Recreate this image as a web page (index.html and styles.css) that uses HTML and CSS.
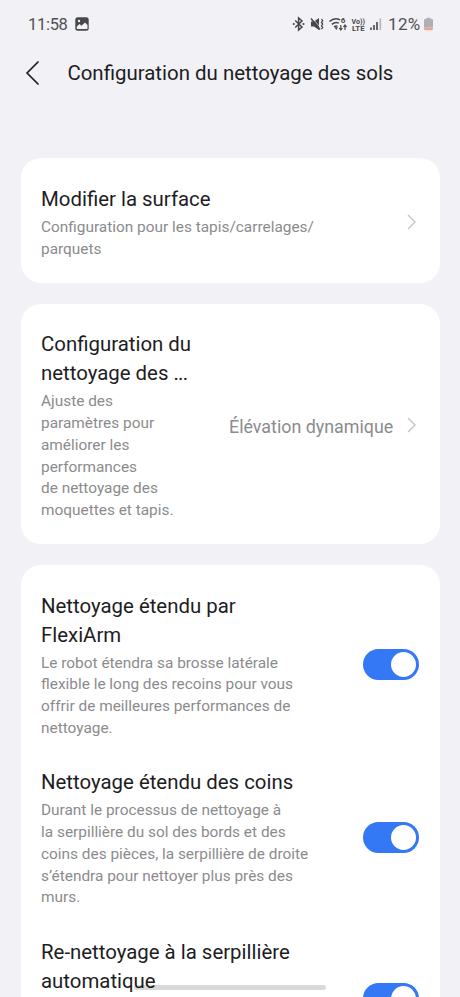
FILE: index.html
```html
<!DOCTYPE html>
<html lang="fr">
<head>
<meta charset="utf-8">
<meta name="viewport" content="width=device-width, initial-scale=1">
<title>Configuration du nettoyage des sols</title>
<link rel="stylesheet" href="styles.css">
</head>
<body>
<div class="screen">
  <div class="status">
    <span class="time">11:58</span>
    <svg class="photo" width="14" height="14" viewBox="0 0 14 14"><rect x=".3" y=".3" width="13.4" height="13.4" rx="2.5" fill="#48484a"/><circle cx="4" cy="4" r="1.2" fill="#f2f1f6"/><path d="M1.8 9.6 4.4 7l2 1.8L10 5.500l2.500 2.400v3.300q0 .8-.8.8H2.600q-.8 0-.8-.8z" fill="#f2f1f6"/></svg>
    <svg class="signals" width="94" height="18" viewBox="0 0 94 18" fill="none" stroke="#48484a">
      <path d="M3.2 5.500 10 12l-3.400 3V3L10 6l-6.800 6.500" stroke-width="1.500"/>
      <circle cx="1.800" cy="9" r="1.100" fill="#48484a" stroke="none"/><circle cx="11.500" cy="9" r="1.100" fill="#48484a" stroke="none"/>
      <path d="M19 6.500h3L27 3v12l-5-3.500h-3z" fill="#48484a" stroke="none"/>
      <path d="M20 3 30 14" stroke="#f2f1f6" stroke-width=".7"/><path d="M19 3.500 28 14.500" stroke-width="1.400"/>
      <path d="M29.500 4l1.200 1.700-1.200 1.700 1.200 1.700-1.200 1.700 1.200 1.700-1.200 1.700" stroke-width="1.300"/>
      <path d="M37.500 6.500q5-4.500 10.500-1.700M39.800 9.400q3.500-3 7-1.300M42 12q2-1.500 3.500-.5" stroke-width="1.500"/>
      <path d="M42.500 12.300h3.500L44.300 15z" fill="#48484a" stroke="none"/>
      <path d="M48.800 10v5M47.200 13l1.600 2 1.600-2M53 15v-5M51.400 12l1.600-2 1.600 2" stroke-width="1.200"/>
      <text x="48.800" y="8.300" class="tiny">6</text>
      <text x="59.500" y="8.500" class="tiny" textLength="13.500" lengthAdjust="spacingAndGlyphs">Vo))</text>
      <text x="60" y="16.300" class="tiny" textLength="12.500" lengthAdjust="spacingAndGlyphs">LTE</text>
      <path d="M79 12.500V15M82 10v5M85 7v8" stroke-width="1.600"/><path d="M88.300 3.500V15" stroke="#b5b5b9" stroke-width="1.600"/>
    </svg>
    <span class="percent">12%</span>
    <svg class="battery" width="9" height="14" viewBox="0 0 10 14"><path d="M3 0h4v1.300h1.500Q10 1.300 10 3v8H0V3q0-1.700 1.500-1.700H3z" fill="#b0b0b4"/><path d="M0 11h10v1q0 2-1.500 2h-7Q0 14 0 12z" fill="#eda294"/></svg>
  </div>
  <header class="header">
    <svg class="back" width="14" height="24" viewBox="0 0 14 24" fill="none" stroke="#1b1b1e" stroke-width="1.700" stroke-linecap="round" stroke-linejoin="round"><path d="M12 1 1 12l11 11"/></svg>
    <h1>Configuration du nettoyage des sols</h1>
  </header>
  <main class="cards">
    <section class="card row">
      <div class="copy">
        <h2>Modifier la surface</h2>
        <p>Configuration pour les tapis/carrelages/<br>parquets</p>
      </div>
      <svg class="chevron" width="9" height="16" viewBox="0 0 9 16"><path d="m1 1 7 7-7 7"/></svg>
    </section>
    <section class="card row">
      <div class="copy">
        <h2>Configuration du<br>nettoyage des <span class="dots">...</span></h2>
        <p>Ajuste des<br>paramètres pour<br>améliorer les<br>performances<br>de nettoyage des<br>moquettes et tapis.</p>
      </div>
      <span class="value">Élévation dynamique</span>
      <svg class="chevron" width="9" height="16" viewBox="0 0 9 16"><path d="m1 1 7 7-7 7"/></svg>
    </section>
    <section class="card stack">
      <div class="row">
        <div class="copy">
          <h2>Nettoyage étendu par<br>FlexiArm</h2>
          <p>Le robot étendra sa brosse latérale<br>flexible le long des recoins pour vous<br>offrir de meilleures performances de<br>nettoyage.</p>
        </div>
        <span class="toggle"></span>
      </div>
      <div class="row">
        <div class="copy">
          <h2>Nettoyage étendu des coins</h2>
          <p>Durant le processus de nettoyage à<br>la serpillière du sol des bords et des<br>coins des pièces, la serpillière de droite<br>s’étendra pour nettoyer plus près des<br>murs.</p>
        </div>
        <span class="toggle"></span>
      </div>
      <div class="row last">
        <div class="copy">
          <h2>Re-nettoyage à la serpillière<br>automatique</h2>
        </div>
        <span class="toggle"></span>
      </div>
    </section>
  </main>
  <div class="home-bar"></div>
</div>
</body>
</html>
```
FILE: styles.css
```css
* { box-sizing: border-box; }
body { margin: 0; font-family: Roboto, "Liberation Sans", sans-serif; color: #1d1d1f; background: #f2f1f6; }
h1, h2, p { margin: 0; font-weight: 400; white-space: nowrap; }
svg { display: block; flex: none; }
.screen { position: relative; height: 997px; overflow: hidden; background: #f2f1f6; }
.status { display: flex; align-items: center; height: 48px; padding: 0 27.5px 0 28px; color: #505052; font-size: 17px; }
.time { font-size: 16.5px; letter-spacing: -.3px; }
.photo { margin-left: 7px; }
.signals { margin-left: auto; }
.percent { margin-left: 2px; letter-spacing: .3px; }
.battery { margin-left: 3px; }
.tiny { font-size: 8px; font-weight: 700; fill: #48484a; stroke: none; }
.header { display: flex; align-items: center; height: 50px; padding-left: 26px; }
.header h1 { margin-left: 27.4px; font-size: 20.45px; }
.cards { display: flex; flex-direction: column; gap: 21px; padding: 60.4px 20.5px 0; }
.card { border-radius: 20px; background: #fff; padding: 26.6px 20.5px 22px; }
.row { display: flex; align-items: center; }
.copy { margin-right: auto; }
h2 { font-size: 20.4px; line-height: 29px; }
.dots { letter-spacing: -.8px; }
p { margin-top: 3.2px; font-size: 15.4px; line-height: 21.75px; color: #8b8b8d; }
.chevron { margin: 0 3.5px 0 14px; fill: none; stroke: #c4c4c6; stroke-width: 1.4; position: relative; top: -1px; }
.value { font-size: 17.85px; color: #8b8b8d; margin-right: -.7px; }
.stack { display: flex; flex-direction: column; gap: 28.5px; }
.toggle { flex: none; width: 56.5px; height: 31px; padding: 3px; border-radius: 16px; background: #3478f6; position: relative; top: -1.3px; }
.toggle::after { content: ""; display: block; width: 25.500px; height: 25.500px; margin-left: auto; border-radius: 50%; background: #fff; }
.last { align-items: flex-start; }
.last .toggle { margin-top: 47px; }
.home-bar { position: absolute; left: 134px; top: 985px; width: 192px; height: 5px; border-radius: 3px; background: rgba(0, 0, 0, .15); }
```
